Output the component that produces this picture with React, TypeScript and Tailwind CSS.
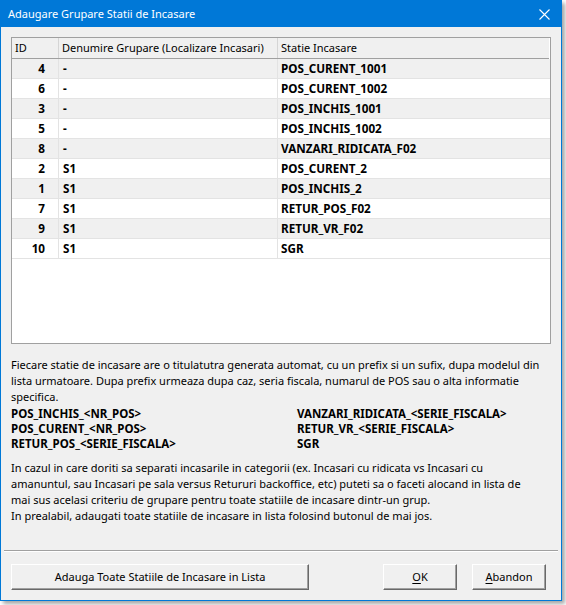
import React from "react";

type Statie = { id: number; grupare: string; statie: string };

const statii: Statie[] = [
  { id: 4, grupare: "-", statie: "POS_CURENT_1001" },
  { id: 6, grupare: "-", statie: "POS_CURENT_1002" },
  { id: 3, grupare: "-", statie: "POS_INCHIS_1001" },
  { id: 5, grupare: "-", statie: "POS_INCHIS_1002" },
  { id: 8, grupare: "-", statie: "VANZARI_RIDICATA_F02" },
  { id: 2, grupare: "S1", statie: "POS_CURENT_2" },
  { id: 1, grupare: "S1", statie: "POS_INCHIS_2" },
  { id: 7, grupare: "S1", statie: "RETUR_POS_F02" },
  { id: 9, grupare: "S1", statie: "RETUR_VR_F02" },
  { id: 10, grupare: "S1", statie: "SGR" },
];

const font = "font-['Noto_Sans',sans-serif]";

const Btn = ({ className, children }: { className?: string; children: React.ReactNode }) => (
  <button
    className={
      "h-[26px] bg-[#f0f0f0] text-[11px] text-black border border-t-white border-l-white border-b-[#696969] border-r-[#696969] shadow-[inset_-1px_-1px_0_#a0a0a0] flex items-center justify-center " +
      (className ?? "")
    }
  >
    {children}
  </button>
);

const App = () => {
  return (
    <div className={`w-[566px] h-[605px] bg-white ${font}`}>
      <div className="w-[562px] h-[601px] border border-[#0078d7] bg-[#f0f0f0] flex flex-col shadow-[3px_3px_4px_rgba(0,0,0,0.35)]">
        {/* title bar */}
        <div className="h-[26px] bg-[#0078d7] flex items-center justify-between pl-[7px] pr-[10px] text-white text-[11px]">
          <span>Adaugare Grupare Statii de Incasare</span>
          <svg width="11" height="11" viewBox="0 0 11 11" className="mr-[1px]">
            <path d="M0.5 0.5 L10.5 10.5 M10.5 0.5 L0.5 10.5" stroke="white" strokeWidth="1.1" />
          </svg>
        </div>

        <div className="px-[10px] pt-[10px] flex flex-col">
          {/* list of stations */}
          <div className="h-[307px] border border-[#a0a0a0] bg-white flex flex-col">
            <div className="h-[21px] flex bg-[#f0f0f0] border-b border-[#a0a0a0] mr-[1px] text-[11px]">
              <div className="w-[47px] pl-[3px] flex items-center border-r border-[#d5d5d5]">ID</div>
              <div className="w-[219px] pl-[3px] flex items-center border-r border-[#d5d5d5] whitespace-nowrap">
                Denumire Grupare (Localizare Incasari)
              </div>
              <div className="flex-1 pl-[3px] flex items-center">Statie Incasare</div>
            </div>
            {statii.map((s, i) => (
              <div
                key={s.id}
                className={
                  "h-[20px] flex font-bold text-[11.7px] border-b border-[#e3e3e3] " +
                  (i % 2 === 0 ? "bg-[#f0f0f0]" : "bg-white")
                }
              >
                <div className="w-[47px] pr-[13px] flex items-center justify-end border-r border-[#e3e3e3]">
                  {s.id}
                </div>
                <div className="w-[219px] pl-[4px] flex items-center border-r border-[#e3e3e3]">{s.grupare}</div>
                <div className="flex-1 pl-[3px] flex items-center">{s.statie}</div>
              </div>
            ))}
          </div>

          {/* explanations */}
          <div className="mt-[13px] text-[11px] leading-[16px] whitespace-nowrap">
            Fiecare statie de incasare are o titulatutra generata automat, cu un prefix si un sufix, dupa modelul din
            <br />
            lista urmatoare. Dupa prefix urmeaza dupa caz, seria fiscala, numarul de POS sau o alta informatie
            <br />
            specifica.
          </div>
          <div className="mt-[1px] grid grid-cols-[286px_1fr] text-[11.5px] leading-[15px] font-bold whitespace-nowrap">
            <span>POS_INCHIS_&lt;NR_POS&gt;</span>
            <span>VANZARI_RIDICATA_&lt;SERIE_FISCALA&gt;</span>
            <span>POS_CURENT_&lt;NR_POS&gt;</span>
            <span>RETUR_VR_&lt;SERIE_FISCALA&gt;</span>
            <span>RETUR_POS_&lt;SERIE_FISCALA&gt;</span>
            <span>SGR</span>
          </div>
          <div className="mt-[9px] text-[11px] leading-[16px] whitespace-nowrap">
            In cazul in care doriti sa separati incasarile in categorii (ex. Incasari cu ridicata vs Incasari cu
            <br />
            amanuntul, sau Incasari pe sala versus Retururi backoffice, etc) puteti sa o faceti alocand in lista de
            <br />
            mai sus acelasi criteriu de grupare pentru toate statiile de incasare dintr-un grup.
            <br />
            In prealabil, adaugati toate statiile de incasare in lista folosind butonul de mai jos.
          </div>
        </div>

        {/* etched separator + buttons */}
        <div className="mt-auto mx-[3px] border-t border-[#a0a0a0] border-b border-b-white" />
        <div className="h-[48px] pl-[10px] pr-[15px] pt-[12px] flex items-start">
          <Btn className="w-[298px]">Adauga Toate Statiile de Incasare in Lista</Btn>
          <div className="flex-1" />
          <Btn className="w-[74px]">
            <span className="underline underline-offset-2">O</span>K
          </Btn>
          <Btn className="w-[74px] ml-[15px]">
            <span className="underline underline-offset-2">A</span>bandon
          </Btn>
        </div>
      </div>
    </div>
  );
};

export default App;
